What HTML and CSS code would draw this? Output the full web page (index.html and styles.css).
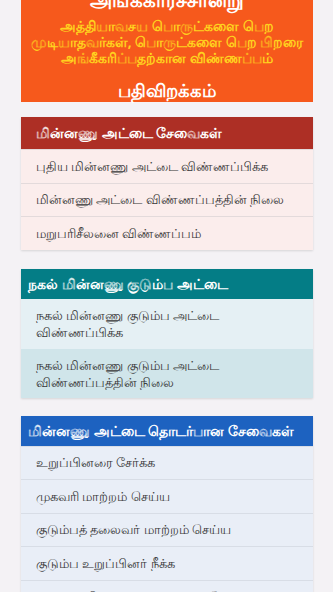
FILE: index.html
```html
<!DOCTYPE html>
<html lang="ta">
<head>
<meta charset="utf-8">
<link rel="stylesheet" href="styles.css">
</head>
<body>
<div class="page">
  <div class="banner">
    <div class="banner-title">அங்கீகாரச்சான்று</div>
    <div class="banner-sub">அத்தியாவசய பொருட்களை பெற முடியாதவர்கள், பொருட்களை பெற பிறரை அங்கீகரிப்பதற்கான விண்ணப்பம்</div>
    <div class="banner-dl">பதிவிறக்கம்</div>
  </div>

  <div class="card card-red">
    <div class="card-head">மின்னணு அட்டை சேவைகள்</div>
    <div class="row">புதிய மின்னணு அட்டை விண்ணப்பிக்க</div>
    <div class="row">மின்னணு அட்டை விண்ணப்பத்தின் நிலை</div>
    <div class="row">மறுபரிசீலனை விண்ணப்பம்</div>
  </div>

  <div class="card card-teal">
    <div class="card-head">நகல் மின்னணு குடும்ப அட்டை</div>
    <div class="row row-a">நகல் மின்னணு குடும்ப அட்டை<br>விண்ணப்பிக்க</div>
    <div class="row row-b">நகல் மின்னணு குடும்ப அட்டை<br>விண்ணப்பத்தின் நிலை</div>
  </div>

  <div class="card card-blue">
    <div class="card-head">மின்னணு அட்டை தொடர்பான சேவைகள்</div>
    <div class="row">உறுப்பினரை சேர்க்க</div>
    <div class="row">முகவரி மாற்றம் செய்ய</div>
    <div class="row">குடும்பத் தலைவர் மாற்றம் செய்ய</div>
    <div class="row">குடும்ப உறுப்பினர் நீக்க</div>
    <div class="row">அட்டை பிறவகைக்கு மாற்றம் செய்ய</div>
  </div>
</div>
</body>
</html>
```

FILE: styles.css
```css
* { box-sizing: border-box; }
html, body {
  margin: 0;
  padding: 0;
  background: #f4f2f5;
  font-family: "Noto Sans", "Lato", sans-serif;
  overflow: hidden;
}
.page {
  padding: 0 20px 0 21px;
  display: flex;
  flex-direction: column;
}
.banner {
  margin-top: -12px;
  background: #f6591c;
  text-align: center;
  padding: 0 4px 6px;
  height: 114px;
  display: flex;
  flex-direction: column;
  align-items: center;
}
.banner-title {
  color: #ffffff;
  font-weight: 700;
  font-size: 20px;
  line-height: 24px;
}
.banner-sub {
  color: #ffd21f;
  font-weight: 700;
  font-size: 13.5px;
  line-height: 16px;
  margin-top: 6px;
}
.banner-dl {
  color: #ffffff;
  font-weight: 700;
  font-size: 18px;
  line-height: 24px;
  margin-top: 12px;
}
.card {
  margin-top: 15px;
  box-shadow: 0 1px 2px rgba(0,0,0,0.12);
}
.card-head {
  color: #ffffff;
  font-weight: 700;
  font-size: 14px;
  height: 32px;
  display: flex;
  align-items: center;
  padding-left: 15px;
  white-space: nowrap;
  overflow: hidden;
}
.row {
  font-size: 13px;
  color: #363636;
  padding: 0 15px;
  min-height: 33.5px;
  display: flex;
  align-items: center;
  border-top: 1px solid #e3dadb;
  line-height: 17px;
}
.card-red .card-head { background: #ad2f25; }
.card-red .row { background: #fbedec; }
.card-red .row:first-of-type { border-top: none; }

.card-teal { margin-top: 19px; }
.card-teal .card-head { background: #047d86; height: 30px; padding-left: 7px; }
.card-teal .row { border-top: none; min-height: 50px; padding-top: 1px; }
.card-teal .row-a { background: #e5f0f4; }
.card-teal .row-b { background: #d0e5ea; min-height: 49px; }

.card-blue { margin-top: 18px; }
.card-blue .card-head { background: #1d62c0; height: 30px; padding-left: 7px; }
.card-blue .row { background: #e9eef7; border-top-color: #d8dde6; }
```
